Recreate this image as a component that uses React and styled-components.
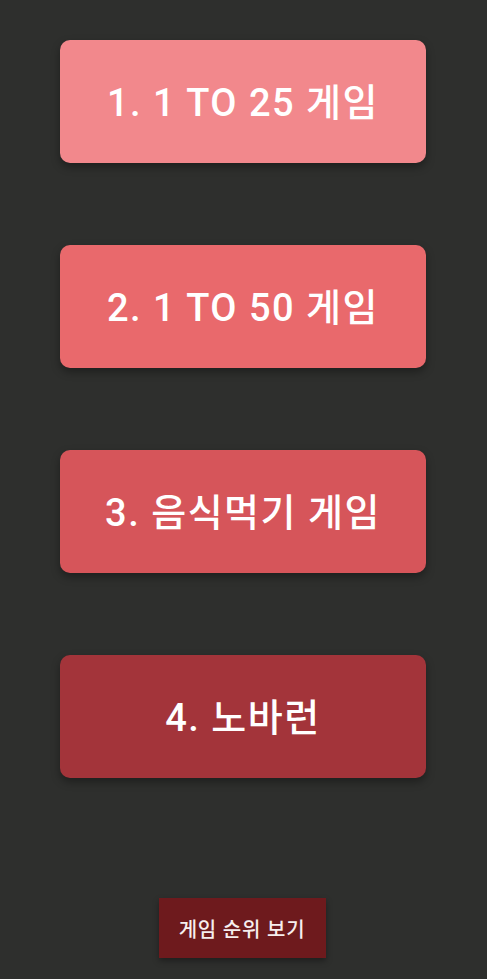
import React from 'react';
import styled, { createGlobalStyle } from 'styled-components';

const GlobalStyle = createGlobalStyle`
  html, body {
    margin: 0;
    padding: 0;
    background: #2e2f2d;
  }
  body {
    font-family: Roboto, "Noto Sans CJK KR", sans-serif;
  }
`

const Screen = styled.div`
  width: 487px;
  height: 979px;
  display: flex;
  flex-direction: column;
  align-items: center;
  box-sizing: border-box;
  padding: 40px 0 21px;
`

const GameList = styled.div`
  display: flex;
  flex-direction: column;
  gap: 82px;
  margin-left: -1px;
`

const GameButton = styled.button`
  width: 366px;
  height: 123px;
  padding: 0 0 4px;
  border: none;
  border-radius: 10px;
  background: ${p => p.color};
  color: #ffffff;
  font-family: inherit;
  font-size: 38px;
  font-weight: 500;
  letter-spacing: 1.5px;
  display: flex;
  align-items: center;
  justify-content: center;
  box-shadow: 0 4px 8px rgba(0, 0, 0, 0.35);
  cursor: pointer;
`

const RankButton = styled.button`
  margin-top: auto;
  width: 167px;
  height: 60px;
  border: none;
  background: #6e1a1d;
  color: #f6eeee;
  font-family: inherit;
  font-size: 20px;
  font-weight: 500;
  letter-spacing: 0.8px;
  box-shadow: 0 3px 6px rgba(0, 0, 0, 0.35);
  margin-left: -3px;
  cursor: pointer;
`

const games = [
  { label: '1. 1 TO 25 게임', color: '#f2888c' },
  { label: '2. 1 TO 50 게임', color: '#e9696c' },
  { label: '3. 음식먹기 게임', color: '#d6555a' },
  { label: '4. 노바런', color: '#a3343a' },
]

export default function App () {
  return (
    <Screen>
      <GlobalStyle />
      <GameList>
        {games.map((game, key) => (
          <GameButton key={key} color={game.color}>{game.label}</GameButton>
        ))}
      </GameList>
      <RankButton>게임 순위 보기</RankButton>
    </Screen>
  )
}
